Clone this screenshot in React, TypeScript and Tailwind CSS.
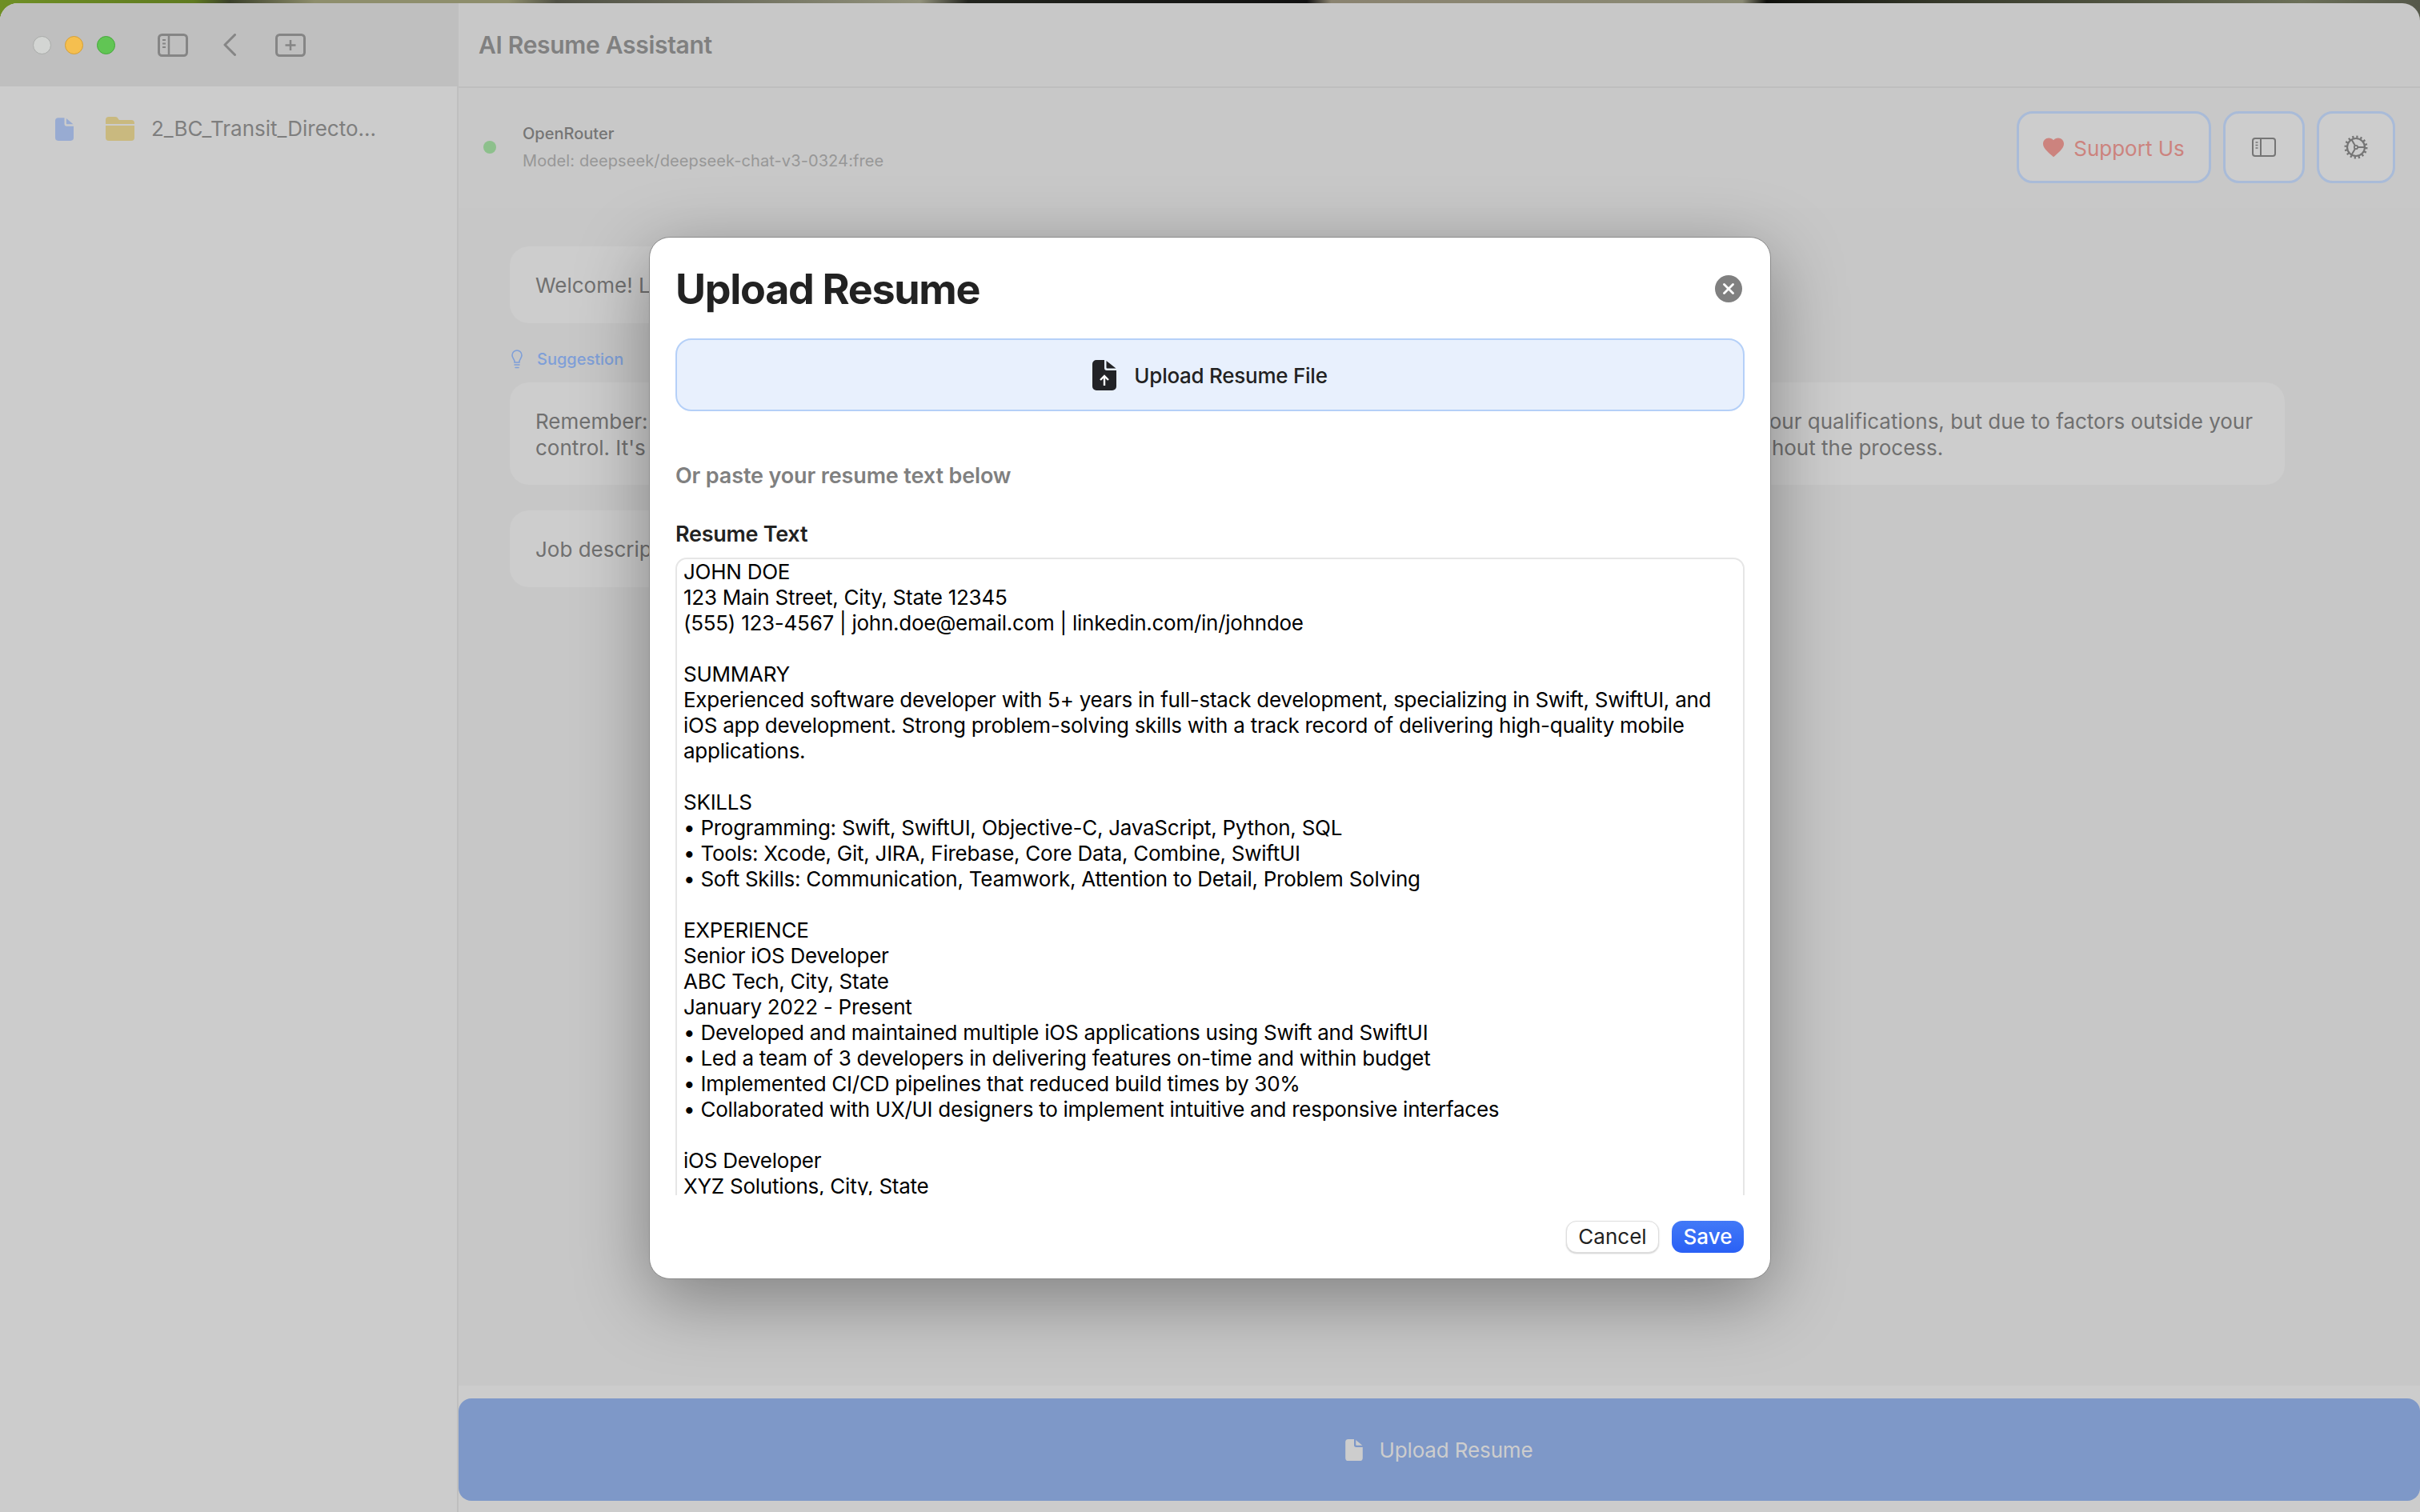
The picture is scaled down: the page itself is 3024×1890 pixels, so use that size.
import React from "react";

const resumeLines = [
  "JOHN DOE",
  "123 Main Street, City, State 12345",
  "(555) 123-4567 | john.doe@email.com | linkedin.com/in/johndoe",
  "",
  "SUMMARY",
  "Experienced software developer with 5+ years in full-stack development, specializing in Swift, SwiftUI, and",
  "iOS app development. Strong problem-solving skills with a track record of delivering high-quality mobile",
  "applications.",
  "",
  "SKILLS",
  "• Programming: Swift, SwiftUI, Objective-C, JavaScript, Python, SQL",
  "• Tools: Xcode, Git, JIRA, Firebase, Core Data, Combine, SwiftUI",
  "• Soft Skills: Communication, Teamwork, Attention to Detail, Problem Solving",
  "",
  "EXPERIENCE",
  "Senior iOS Developer",
  "ABC Tech, City, State",
  "January 2022 - Present",
  "• Developed and maintained multiple iOS applications using Swift and SwiftUI",
  "• Led a team of 3 developers in delivering features on-time and within budget",
  "• Implemented CI/CD pipelines that reduced build times by 30%",
  "• Collaborated with UX/UI designers to implement intuitive and responsive interfaces",
  "",
  "iOS Developer",
  "XYZ Solutions, City, State",
  "June 2019 - December 2021",
];

const SidebarIcon: React.FC<{ className?: string }> = ({ className }) => (
  <svg viewBox="0 0 38 29" fill="none" stroke="currentColor" className={className}>
    <rect x="1.5" y="1.5" width="35" height="26" rx="4" strokeWidth="3" />
    <path d="M14 2v25" strokeWidth="2.5" />
    <path d="M6 8h4M6 12.5h4M6 17h4" strokeWidth="2" />
  </svg>
);

const DocIcon: React.FC<{ className?: string }> = ({ className }) => (
  <svg viewBox="0 0 24 30" fill="currentColor" className={className}>
    <path d="M4 0h8v8a3 3 0 0 0 3 3h9v15a4 4 0 0 1-4 4H4a4 4 0 0 1-4-4V4a4 4 0 0 1 4-4z" />
    <path d="M14.5 1l9 7.5h-8a1 1 0 0 1-1-1z" />
  </svg>
);

const GearIcon: React.FC<{ className?: string }> = ({ className }) => (
  <svg viewBox="0 0 30 30" fill="none" stroke="currentColor" className={className}>
    <circle cx="15" cy="15" r="11" strokeWidth="2.2" />
    <circle cx="15" cy="15" r="13" strokeWidth="3" strokeDasharray="2.2 2.9" />
    <circle cx="15" cy="15" r="2.2" strokeWidth="1.8" />
    <path d="M17.2 15H26M13.9 13.1L9.5 5.5M13.9 16.9L9.5 24.5" strokeWidth="2" />
  </svg>
);

const App: React.FC = () => {
  return (
    <div className="relative w-[3024px] h-[1890px] overflow-hidden bg-[linear-gradient(90deg,#6f8f25_0%,#5f7a20_8%,#3a3f2a_9.5%,#8e8e6c_13%,#8e8e6c_21%,#4f5044_23%,#92927c_38%,#22241e_40%,#111111_54%,#8a8370_55%,#8a8a74_72%,#0f100c_73%,#35382a_80%,#6b6f58_95%,#55584a_100%)] pt-[4px] font-[Inter,sans-serif]">
      <div className="flex h-[1886px] rounded-t-[22px] overflow-hidden bg-[#c8c8c8]">
        {/* sidebar */}
        <div className="flex flex-col w-[573px] shrink-0 bg-[#cccccc] border-r-2 border-[#bfbfbf]">
          <div className="flex items-center h-[104px] bg-[#bfbfbf] pl-[41px] text-[#858585]">
            <div className="w-[23px] h-[23px] rounded-full bg-[#d3d5d3] border border-[#a9aba9]" />
            <div className="w-[23px] h-[23px] rounded-full bg-[#f5bf4f] border border-[#d59f35] ml-[17px]" />
            <div className="w-[23px] h-[23px] rounded-full bg-[#61c554] border border-[#45a83a] ml-[17px]" />
            <SidebarIcon className="w-[38px] h-[29px] ml-[53px]" />
            <svg viewBox="0 0 16 28" fill="none" stroke="currentColor" strokeWidth="3" strokeLinecap="round" strokeLinejoin="round" className="w-[16px] h-[28px] ml-[44px]">
              <path d="M14.5 1.5L2 14l12.5 12.5" />
            </svg>
            <svg viewBox="0 0 38 29" fill="none" stroke="currentColor" className="w-[38px] h-[29px] ml-[49px]">
              <rect x="1.5" y="1.5" width="35" height="26" rx="4" strokeWidth="3" />
              <path d="M19 8v13M12.5 14.5h13" strokeWidth="2.5" />
            </svg>
          </div>
          <div className="flex items-center pl-[69px] pt-[37px]">
            <DocIcon className="w-[23px] h-[29px] text-[#98abd2]" />
            <svg viewBox="0 0 36 30" fill="#c9b97f" className="w-[36px] h-[30px] ml-[40px]">
              <path d="M4 0h8c2 0 3 1 4 3l1 1h15a4 4 0 0 1 4 4v1H0V4a4 4 0 0 1 4-4z" />
              <path d="M0 11h36v15a4 4 0 0 1-4 4H4a4 4 0 0 1-4-4z" />
            </svg>
            <span className="ml-[21px] text-[26px] leading-[32px] text-[#7e7e7e]">2_BC_Transit_Directo...</span>
          </div>
        </div>

        {/* main column */}
        <div className="flex flex-col flex-1 min-w-0">
          <div className="flex items-center h-[106px] pl-[25px] border-b-2 border-[#bebebe] shrink-0">
            <span className="text-[30px] font-semibold tracking-[-0.01em] text-[#808080]">AI Resume Assistant</span>
          </div>

          <div className="flex items-center h-[150px] pl-[31px] pr-[31px] pb-[2px] shrink-0 bg-[#c8c8c8]">
            <div className="w-[16px] h-[16px] rounded-full bg-[#8dc08c]" />
            <div className="ml-[33px] flex flex-col gap-[12px]">
              <span className="text-[20px] leading-[22px] font-medium text-[#757575]">OpenRouter</span>
              <span className="text-[20px] leading-[22px] tracking-[0.005em] text-[#979797]">Model: deepseek/deepseek-chat-v3-0324:free</span>
            </div>
            <div className="ml-auto flex items-center gap-[15px]">
              <div className="flex items-center justify-center gap-[12px] w-[243px] h-[90px] rounded-[20px] border-[3px] border-[#a9bbd8] bg-[#cdcdcd] text-[#cc837e]">
                <svg viewBox="2 3 20 18.5" fill="currentColor" className="w-[26px] h-[25px]">
                  <path d="M12 21.35l-1.45-1.32C5.4 15.36 2 12.28 2 8.5 2 5.42 4.42 3 7.5 3c1.74 0 3.41.81 4.5 2.09C13.09 3.81 14.76 3 16.5 3 19.58 3 22 5.42 22 8.5c0 3.78-3.4 6.86-8.55 11.54L12 21.35z" />
                </svg>
                <span className="text-[26px] pt-[2px]">Support Us</span>
              </div>
              <div className="flex items-center justify-center w-[102px] h-[90px] rounded-[20px] border-[3px] border-[#a9bbd8] bg-[#cdcdcd] text-[#757575]">
                <svg viewBox="0 0 30 24" fill="none" stroke="currentColor" className="w-[30px] h-[24px]">
                  <rect x="1" y="1" width="28" height="22" rx="3" strokeWidth="2" />
                  <path d="M11 1v22" strokeWidth="2" />
                  <path d="M4.5 6h3M4.5 9.5h3M4.5 13h3" strokeWidth="1.6" />
                </svg>
              </div>
              <div className="flex items-center justify-center w-[98px] h-[90px] rounded-[20px] border-[3px] border-[#a9bbd8] bg-[#cdcdcd] text-[#757575]">
                <GearIcon className="w-[30px] h-[30px]" />
              </div>
            </div>
          </div>

          <div className="flex-1 flex flex-col items-start pt-[48px] pl-[64px] pr-[169px] bg-[#c7c7c7] text-[26px] leading-[33px] text-[#707070]">
            <div className="flex items-center h-[96px] px-[32px] rounded-[24px] bg-[#cdcdcd]">
              Welcome! Let's get started with your job application today.
            </div>
            <div className="flex items-center h-[24px] mt-[33px] pl-[2px] text-[#7f9fd8]">
              <svg viewBox="0 0 14 24" fill="none" stroke="currentColor" strokeWidth="1.6" className="w-[14px] h-[24px]">
                <path d="M7 1a6 6 0 0 0-6 6c0 3 2 4.5 3 7.5v1.5h6v-1.5c1-3 3-4.5 3-7.5a6 6 0 0 0-6-6z" />
                <path d="M4 19h6M5 22.5h4" strokeLinecap="round" />
              </svg>
              <span className="ml-[18px] text-[20px] leading-[24px] font-medium">Suggestion</span>
            </div>
            <div className="w-full mt-[17px] h-[128px] px-[32px] py-[32px] rounded-[24px] bg-[#cdcdcd] whitespace-pre">
              <div>Remember: Every application is a chance to learn and grow, and any rejection from an employer is very rarely a reflection of your qualifications, but due to factors outside your</div>
              <div>control. It's a normal part of any modern job search, so please be truly kind to yourself stay positive and keep on going throughout the process.</div>
            </div>
            <div className="flex items-center h-[96px] mt-[32px] px-[32px] rounded-[24px] bg-[#cdcdcd]">
              Job description analysis will appear here once you upload your resume.
            </div>
          </div>

          <div className="h-[158px] shrink-0 pt-[16px] bg-[#cccccc]">
            <div className="flex items-center justify-center gap-[20px] h-[128px] rounded-[16px] bg-[#7e98c8] text-[#cdcdcd]">
              <DocIcon className="w-[22px] h-[27px]" />
              <span className="text-[26px] tracking-[-0.005em]">Upload Resume</span>
            </div>
          </div>
        </div>
      </div>

      {/* modal */}
      <div className="absolute left-[811px] top-[296px] w-[1402px] h-[1303px] flex flex-col px-[32px] rounded-[26px] bg-white border border-[#8a8a8a] shadow-[0_24px_90px_rgba(0,0,0,0.36)]">
        <div className="flex items-center justify-between h-[126px] shrink-0 pr-[2px]">
          <h1 className="text-[52px] leading-[64px] font-bold tracking-[-0.025em] text-[#222222] pt-[3px]">Upload Resume</h1>
          <div className="flex items-center justify-center w-[34px] h-[34px] mt-[2px] rounded-full bg-[#808080] mr-[1px]">
            <svg viewBox="0 0 14 14" fill="none" stroke="white" strokeWidth="2.8" strokeLinecap="round" className="w-[14px] h-[14px]">
              <path d="M1.5 1.5l11 11M12.5 1.5l-11 11" />
            </svg>
          </div>
        </div>
        <div className="flex items-center justify-center gap-[22px] h-[91px] shrink-0 rounded-[20px] border-2 border-[#b5d0f8] bg-[#e8f0fd] text-[#222222]">
          <svg viewBox="0 0 30 38" className="w-[30px] h-[38px]">
            <path fill="#222326" d="M5 0h10v10a3 3 0 0 0 3 3h12v20a5 5 0 0 1-5 5H5a5 5 0 0 1-5-5V5a5 5 0 0 1 5-5z" />
            <path fill="#222326" d="M17.5 1L29.5 10.5H18.5a1 1 0 0 1-1-1z" />
            <path d="M15 32V20M10 25l5-5 5 5" fill="none" stroke="white" strokeWidth="2.4" />
          </svg>
          <span className="text-[26px] font-medium tracking-[-0.01em] pt-[1px]">Upload Resume File</span>
        </div>
        <div className="mt-[64px] text-[27px] leading-[34px] font-semibold tracking-[-0.005em] text-[#808080]">Or paste your resume text below</div>
        <div className="mt-[39px] text-[27px] leading-[34px] font-semibold tracking-[-0.01em] text-[#222222]">Resume Text</div>
        <div className="mt-[12px] h-[797px] shrink-0 overflow-hidden">
          <div className="h-[900px] rounded-t-[14px] border-2 border-[#e6e6e6] px-[8px] text-[26px] leading-[32px] tracking-[-0.01em] text-black whitespace-pre">
            {resumeLines.map((line, index) => (
              <div key={index} className="h-[32px]">
                {line}
              </div>
            ))}
          </div>
        </div>
        <div className="flex justify-end gap-[16px] mt-[32px] pr-[1px]">
          <button className="w-[116px] h-[40px] rounded-[13px] bg-white border border-[#dedede] shadow-[0_1px_2px_rgba(0,0,0,0.2)] text-[26px] leading-none text-[#222222]">Cancel</button>
          <button className="w-[90px] h-[40px] rounded-[13px] bg-gradient-to-b from-[#4279f7] to-[#2a60f5] text-[26px] leading-none font-medium text-white">Save</button>
        </div>
      </div>
    </div>
  );
};

export default App;
